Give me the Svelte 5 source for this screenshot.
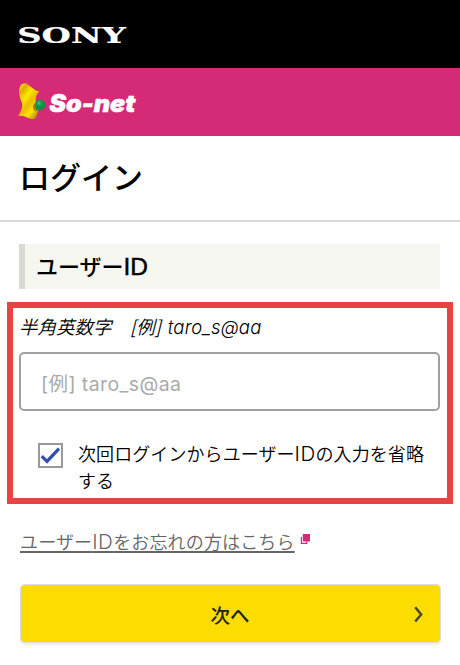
<script>
  let userId = $state('');
  let remember = $state(true);
</script>

<main>
  <div class="sony">
    <svg width="120" height="30" viewBox="0 0 120 30" role="img" aria-label="SONY">
      <text x="0.3" y="23" textLength="108.5" lengthAdjust="spacingAndGlyphs">SONY</text>
    </svg>
  </div>
  <header class="brand">
    <svg width="130" height="50" viewBox="12 78 130 50" role="img" aria-label="So-net">
      <defs>
        <linearGradient id="ribbon" x1="0" y1="0" x2=".75" y2="1">
          <stop offset="0" stop-color="#c99b00" />
          <stop offset=".12" stop-color="#f3d000" />
          <stop offset=".22" stop-color="#dcae00" />
          <stop offset=".42" stop-color="#ffe900" />
          <stop offset=".6" stop-color="#e8bd00" />
          <stop offset=".8" stop-color="#ffe300" />
          <stop offset="1" stop-color="#b98d00" />
        </linearGradient>
        <radialGradient id="ball" cx=".4" cy=".35" r=".65">
          <stop offset="0" stop-color="#4cc68a" />
          <stop offset=".35" stop-color="#06a04f" />
          <stop offset="1" stop-color="#088a42" />
        </radialGradient>
      </defs>
      <path d="M20 86.5Q21.5 83 25.5 83.2C30 85 34 91 39.3 91.2Q36.5 94 35.8 97.5C35 102 36.6 105 37.5 109C38.5 114 36.5 117 34.2 119.3C28 119 25 115 18.2 115.8C21.5 111 23.5 106 21.5 101.5C19 96 18.3 92 20 86.5Z" fill="url(#ribbon)" />
      <ellipse cx="36.5" cy="107" rx="3.5" ry="4" fill="#9b8414" />
      <circle cx="40" cy="104.7" r="5.2" fill="url(#ball)" />
      <text class="sonet" x="49.3" y="112.3" textLength="86" lengthAdjust="spacingAndGlyphs">So-net</text>
    </svg>
  </header>
  <h1>ログイン</h1>
  <h2>ユーザー<span>ID</span></h2>
  <section class="focus">
    <p class="hint">半角英数字　<span class="sample">[例]</span><span class="latin">taro_s@aa</span></p>
    <label class="field">
      <input type="text" bind:value={userId} aria-label="ユーザーID" placeholder="[例] taro_s@aa" />
    </label>
    <label class="remember">
      <input type="checkbox" bind:checked={remember} />
      <span class="box">
        {#if remember}
          <svg width="21" height="21" viewBox="0 0 21 21"><path d="M1.7 11.2L7 16.4L19 3.6" /></svg>
        {/if}
      </span>
      <span class="text">次回ログインからユーザー<i>ID</i>の入力を省略する</span>
    </label>
  </section>
  <div class="forgot">
    <a href="#forgot">ユーザー<i>ID</i>をお忘れの方はこちら</a>
    <svg width="11" height="11" viewBox="0 0 11 11"><path d="M2.8 0H10V7.5H2.8Z" fill="#d52a78" /><path d="M1.4 2.8V9.3H6.8V7.5" fill="none" stroke="#d52a78" stroke-width="1.2" /></svg>
  </div>
  <button type="button">
    <span>次へ</span>
    <svg width="9" height="17" viewBox="0 0 9 17"><path d="M1.2 1.2L7.2 8.5L1.2 15.6" /></svg>
  </button>
</main>

<style>
  :global(body) { background: #fff; }
  main {
    width: 460px;
    height: 665px;
    overflow: hidden;
    box-sizing: border-box;
    background: #fff;
    color: #000;
    font-family: "Noto Sans CJK JP", sans-serif;
  }
  .sony { height: 68px; background: #000; padding: 20px 17px; box-sizing: border-box; }
  svg { display: block; flex: none; }
  .sony text {
    font: 700 23px "DejaVu Serif", serif;
    fill: #fff;
    stroke: #fff;
    stroke-width: .2px;
  }
  .brand { height: 68px; padding: 10px 12px; box-sizing: border-box; background: #d52a76; }
  .sonet {
    font: italic 900 24px Inter, sans-serif;
    fill: #fff;
    stroke: #fff;
    stroke-width: .5px;
  }
  h1 {
    height: 86px;
    margin: 0;
    padding-left: 19px;
    box-sizing: border-box;
    border-bottom: 2px solid #d8d8d8;
    font-size: 31px;
    line-height: 80px;
    font-weight: 500;
  }
  h2 {
    height: 45px;
    margin: 22px 20px 13px 19px;
    padding-left: 11px;
    box-sizing: border-box;
    border-left: 6px solid #d8dad3;
    background: #f5f6f0;
    font-size: 22px;
    line-height: 43px;
    font-weight: 500;
  }
  h2 span { font-family: "Liberation Sans", sans-serif; font-weight: 400; font-size: 24.5px; line-height: 1; -webkit-text-stroke: .5px #000; }
  .focus {
    width: 446px;
    height: 202px;
    margin-left: 7px;
    padding: 0 7px 0 6px;
    border: 6px solid #ea4142;
    box-sizing: border-box;
  }
  .hint { height: 44px; margin: 0; font-size: 18.5px; line-height: 37px; font-style: italic; font-weight: 350; white-space: pre; }
  .latin { margin-left: 7px; font-family: Inter, sans-serif; font-weight: 350; letter-spacing: .2px; }
  .field { display: block; height: 59px; }
  .field input {
    width: 421px;
    height: 59px;
    box-sizing: border-box;
    padding: 4px 20px 0;
    border: 2px solid #a0a0a0;
    border-radius: 5px;
    outline: 0;
    font: 400 19.5px Inter, "Noto Sans CJK JP", sans-serif;
    letter-spacing: .4px;
    background: #fff;
  }
  .field input::placeholder { color: #aaa; opacity: 1; }
  .remember { display: flex; margin-top: 28px; padding-left: 19px; align-items: flex-start; }
  .remember input { appearance: none; width: 0; height: 0; margin: 0; }
  .box { width: 25px; height: 25px; margin: 4px 15px 0 0; box-sizing: border-box; border: 2px solid #999; flex: none; }
  .box path { fill: none; stroke: #304fb0; stroke-width: 3.2; }
  .text { width: 354px; margin-top: 1px; font-size: 18px; line-height: 27px; font-weight: 350; letter-spacing: .08px; word-break: break-all; }
  i { font-family: Inter, sans-serif; font-style: normal; font-weight: 300; font-size: 20.5px; line-height: 1; letter-spacing: .4px; }
  .forgot { display: flex; height: 33px; margin: 24px 0 0 20px; align-items: flex-start; }
  .forgot a { color: #666; font-size: 18px; line-height: 27px; font-weight: 350; letter-spacing: .15px; text-underline-offset: 2px; text-decoration-thickness: 1.5px; }
  .forgot svg { margin: 6px 0 0 5px; }
  button {
    display: flex;
    width: 421px;
    height: 59px;
    margin: 23px 0 0 19.5px;
    padding: 2px 17px 0 26px;
    box-sizing: border-box;
    align-items: center;
    border: 1.5px solid #ddd;
    border-radius: 5px;
    background: #fddc00;
    box-shadow: 0 2px 1px #eee;
    color: #222;
    font: 500 19.5px "Noto Sans CJK JP", sans-serif;
  }
  button span { flex: 1; text-align: center; }
  button path { fill: none; stroke: #444; stroke-width: 2.4; }
</style>
